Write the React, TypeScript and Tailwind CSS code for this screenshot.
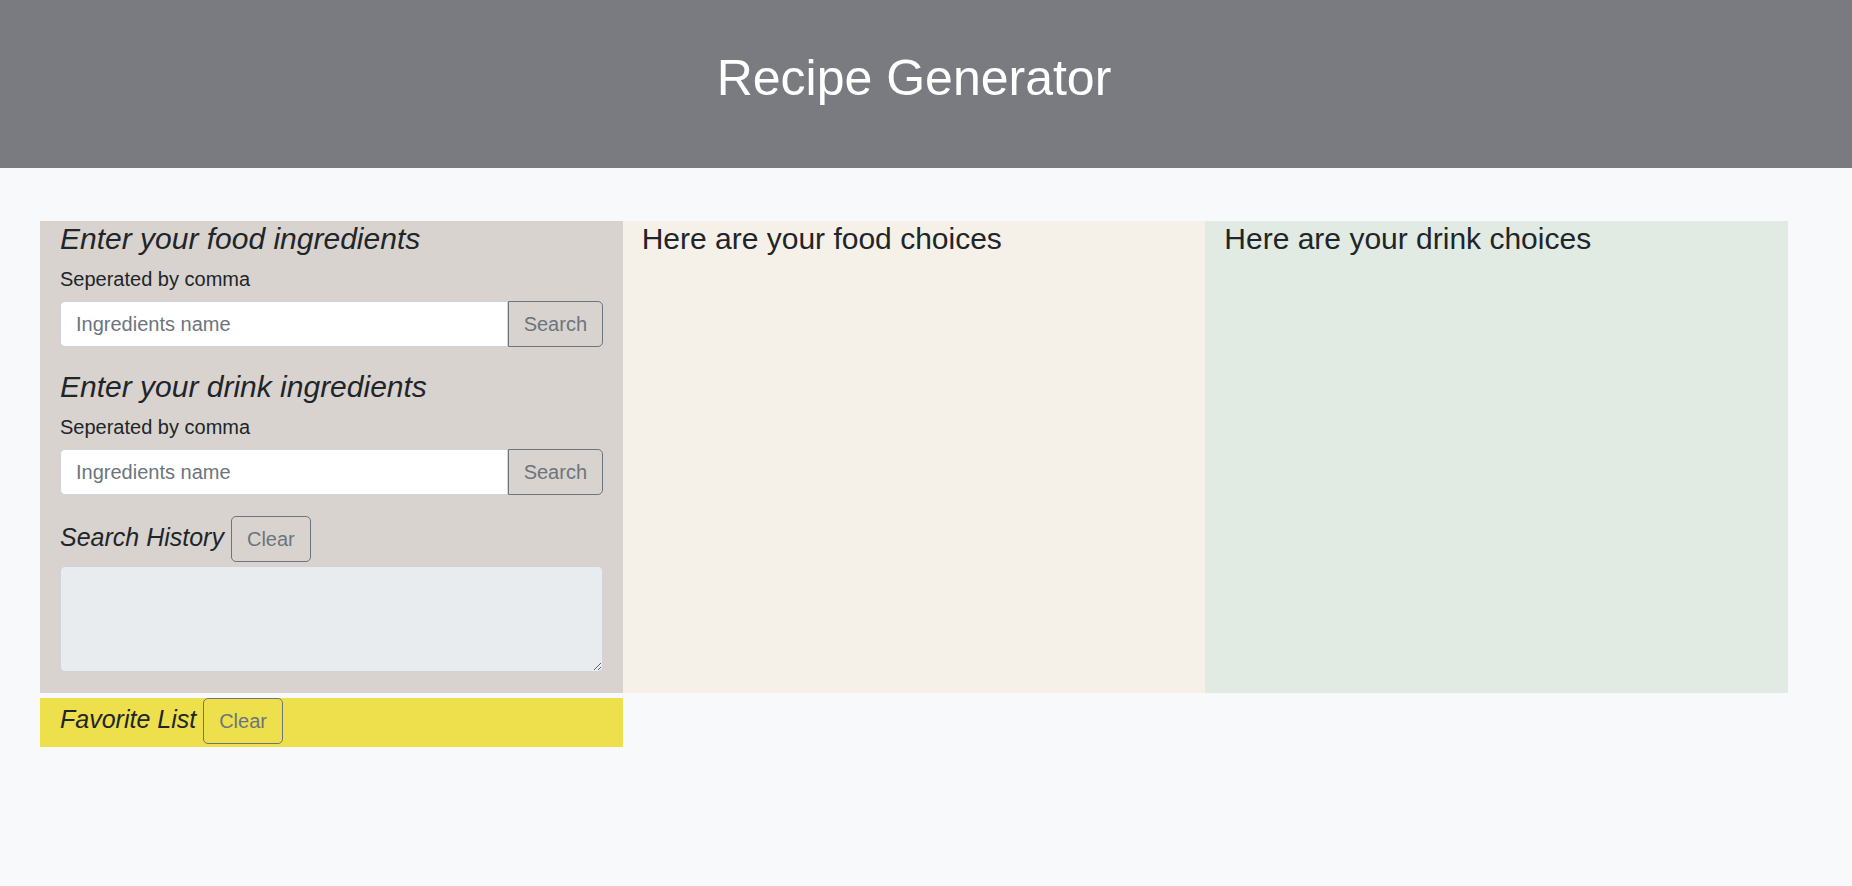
import React from "react";

function SearchGroup() {
  return (
    <div className="flex h-[46px]">
      <input
        type="text"
        placeholder="Ingredients name"
        className="h-[46px] flex-1 min-w-0 rounded-l-[5px] border border-[#ced4da] bg-white px-[15px] text-[20px] leading-[30px] text-[#495057] placeholder:text-[#6c757d] outline-none"
      />
      <button className="h-[46px] w-[95px] rounded-r-[5px] border border-[#6c757d] bg-transparent px-[15px] text-[20px] leading-[30px] text-[#6c757d]">
        Search
      </button>
    </div>
  );
}

export default function App() {
  return (
    <div
      className="min-h-screen bg-[#f8f9fa] text-[#212529]"
      style={{ fontFamily: '"Liberation Sans", Arial, sans-serif' }}
    >
      <header className="h-[168px] bg-[#7a7b80] pt-[48px] pr-[24px] text-center">
        <h1 className="text-[50px] leading-[60px] font-normal text-white">Recipe Generator</h1>
      </header>

      <main className="ml-[40px] mt-[53px] grid w-[1748px] grid-cols-3 gap-y-[5px]">
        <section className="bg-[#d8d3ce] px-[20px] pb-[21px]">
          <h4 className="text-[30px] leading-[36px] italic">Enter your food ingredients</h4>
          <p className="mt-[10px] text-[20px] leading-[24px]">Seperated by comma</p>
          <div className="mt-[10px]">
            <SearchGroup />
          </div>

          <h4 className="mt-[22px] text-[30px] leading-[36px] italic">Enter your drink ingredients</h4>
          <p className="mt-[10px] text-[20px] leading-[24px]">Seperated by comma</p>
          <div className="mt-[10px]">
            <SearchGroup />
          </div>

          <div className="mt-[21px] flex items-baseline gap-[7px]">
            <h5 className="text-[25px] leading-[30px] italic">Search History</h5>
            <button className="h-[46px] rounded-[5px] border border-[#6c757d] bg-transparent px-[15px] py-[7px] text-[20px] leading-[30px] text-[#6c757d]">
              Clear
            </button>
          </div>
          <textarea
            readOnly
            className="mt-[4px] block h-[106px] w-full rounded-[5px] border border-[#ced4da] bg-[#e9ecef] outline-none"
          />
        </section>

        <section className="bg-[#f5f1e8] px-[19px]">
          <h4 className="text-[30px] leading-[36px]">Here are your food choices</h4>
        </section>

        <section className="bg-[#e1ebe3] px-[19px]">
          <h4 className="text-[30px] leading-[36px]">Here are your drink choices</h4>
        </section>

        <section className="flex items-baseline gap-[7px] bg-[#ede04c] px-[20px] pb-[3px]">
          <h5 className="text-[25px] leading-[30px] italic">Favorite List</h5>
          <button className="h-[46px] rounded-[5px] border border-[#6c757d] bg-transparent px-[15px] py-[7px] text-[20px] leading-[30px] text-[#6c757d]">
            Clear
          </button>
        </section>
      </main>
    </div>
  );
}
